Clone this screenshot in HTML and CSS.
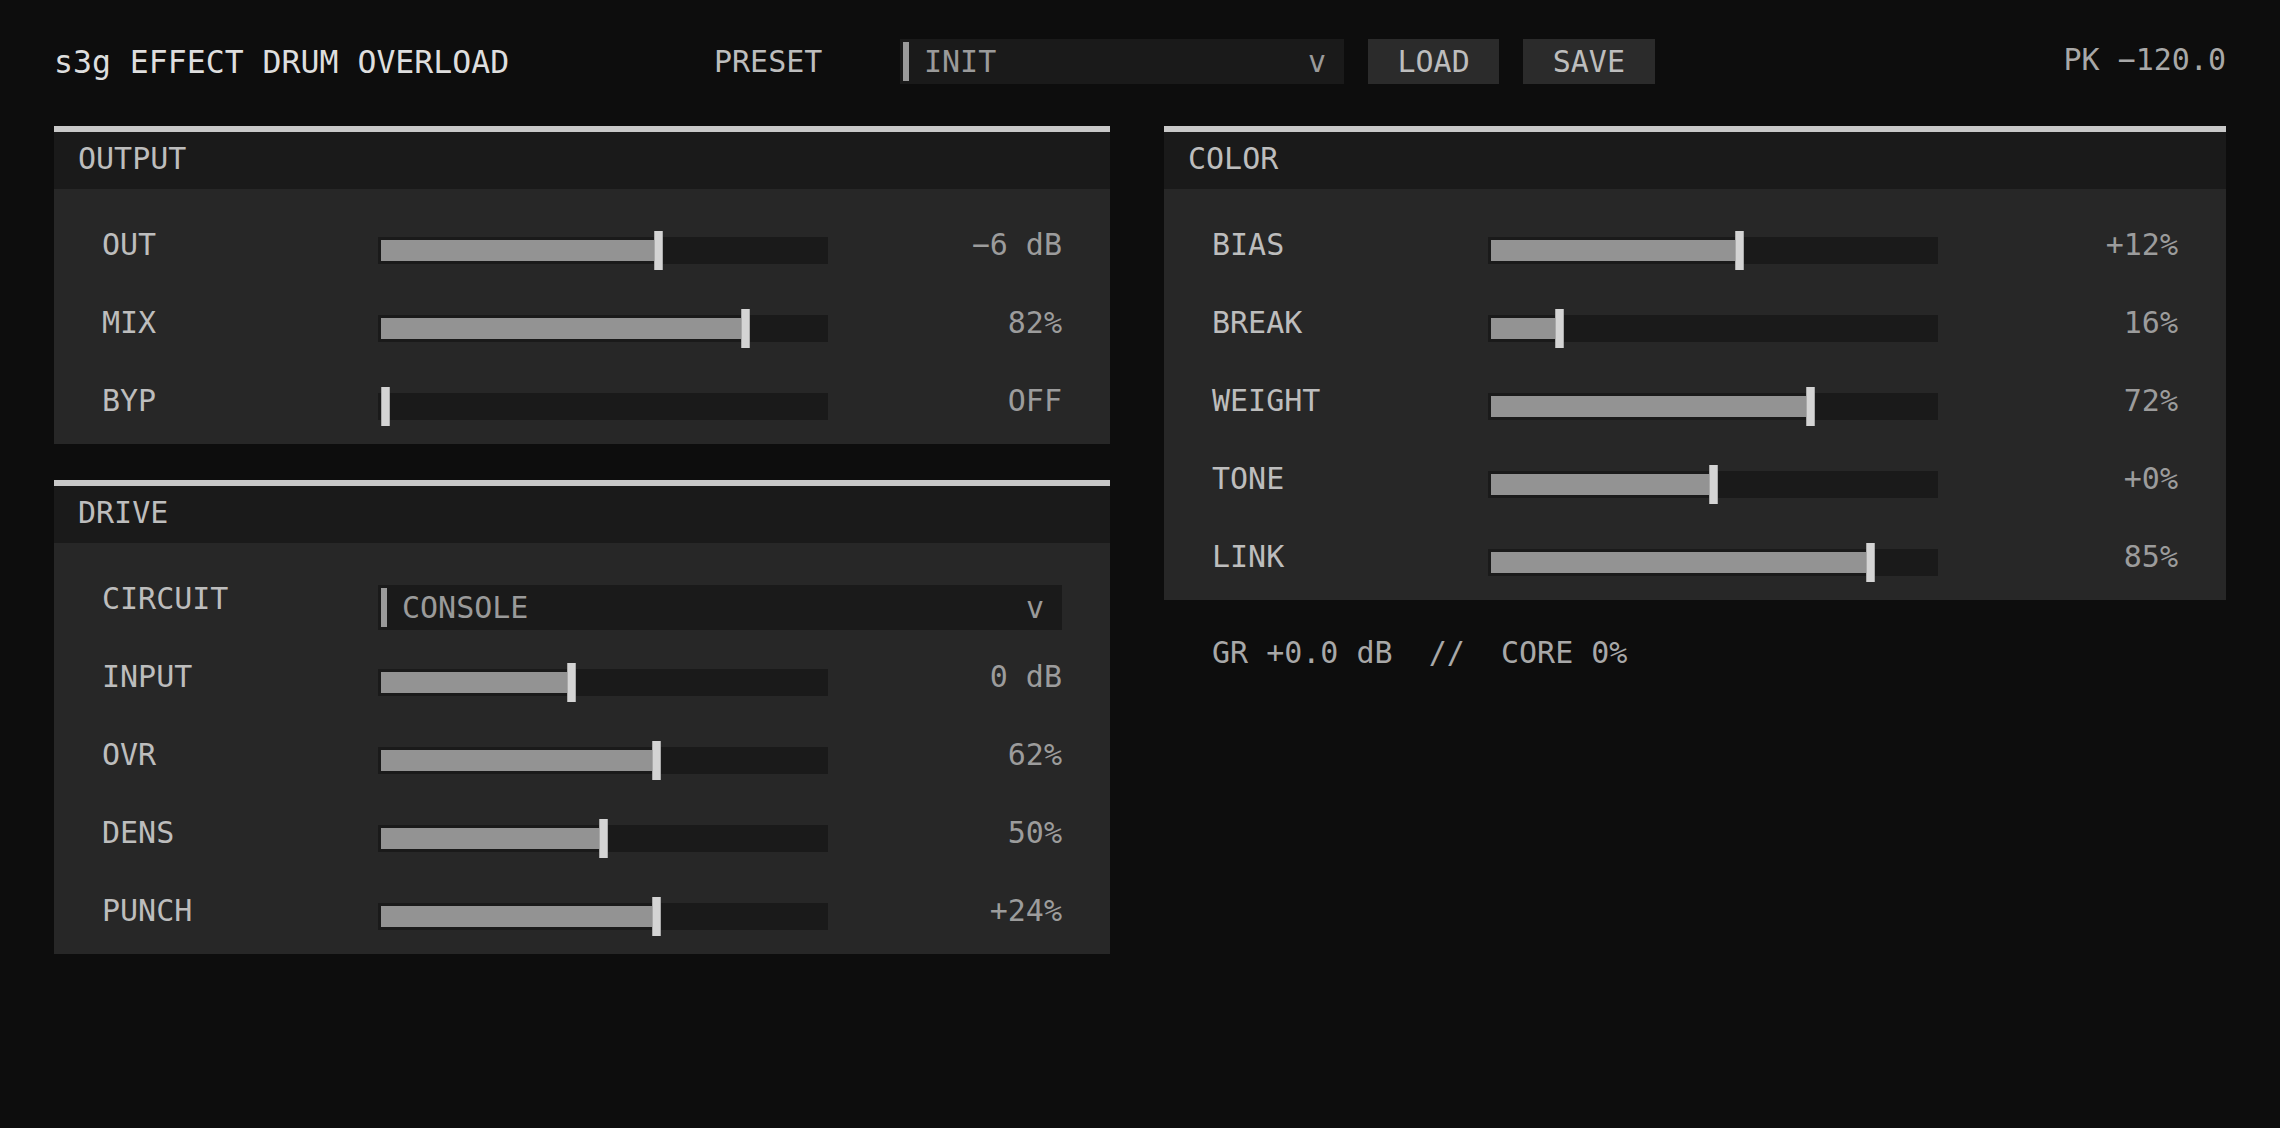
FILE: index.html
```html
<!DOCTYPE html>
<html lang="en">
<head>
<meta charset="utf-8">
<title>s3g EFFECT DRUM OVERLOAD</title>
<link rel="stylesheet" href="styles.css">
</head>
<body>
<div class="app">
  <header class="topbar">
    <div class="title">s3g EFFECT DRUM OVERLOAD</div>
    <div class="preset-label">PRESET</div>
    <div class="select select-top">
      <span class="select-bar"></span>
      <span class="select-text">INIT</span>
      <span class="select-caret">v</span>
    </div>
    <button class="btn">LOAD</button>
    <button class="btn">SAVE</button>
    <div class="peak">PK −120.0</div>
  </header>

  <main class="columns">
    <div class="col">
      <section class="panel">
        <div class="panel-head">OUTPUT</div>
        <div class="panel-body">
          <div class="row">
            <div class="label">OUT</div>
            <div class="slider" style="--p:0.625"><div class="track"><div class="fill"></div></div><div class="handle"></div></div>
            <div class="value">−6 dB</div>
          </div>
          <div class="row">
            <div class="label">MIX</div>
            <div class="slider" style="--p:0.82"><div class="track"><div class="fill"></div></div><div class="handle"></div></div>
            <div class="value">82%</div>
          </div>
          <div class="row">
            <div class="label">BYP</div>
            <div class="slider" style="--p:0"><div class="track"><div class="fill"></div></div><div class="handle"></div></div>
            <div class="value">OFF</div>
          </div>
        </div>
      </section>

      <section class="panel panel-drive">
        <div class="panel-head">DRIVE</div>
        <div class="panel-body">
          <div class="row">
            <div class="label">CIRCUIT</div>
            <div class="select select-row">
              <span class="select-bar"></span>
              <span class="select-text">CONSOLE</span>
              <span class="select-caret">v</span>
            </div>
          </div>
          <div class="row">
            <div class="label">INPUT</div>
            <div class="slider" style="--p:0.4286"><div class="track"><div class="fill"></div></div><div class="handle"></div></div>
            <div class="value">0 dB</div>
          </div>
          <div class="row">
            <div class="label">OVR</div>
            <div class="slider" style="--p:0.62"><div class="track"><div class="fill"></div></div><div class="handle"></div></div>
            <div class="value">62%</div>
          </div>
          <div class="row">
            <div class="label">DENS</div>
            <div class="slider" style="--p:0.5"><div class="track"><div class="fill"></div></div><div class="handle"></div></div>
            <div class="value">50%</div>
          </div>
          <div class="row">
            <div class="label">PUNCH</div>
            <div class="slider" style="--p:0.62"><div class="track"><div class="fill"></div></div><div class="handle"></div></div>
            <div class="value">+24%</div>
          </div>
        </div>
      </section>
    </div>

    <div class="col">
      <section class="panel">
        <div class="panel-head">COLOR</div>
        <div class="panel-body">
          <div class="row">
            <div class="label">BIAS</div>
            <div class="slider" style="--p:0.56"><div class="track"><div class="fill"></div></div><div class="handle"></div></div>
            <div class="value">+12%</div>
          </div>
          <div class="row">
            <div class="label">BREAK</div>
            <div class="slider" style="--p:0.155"><div class="track"><div class="fill"></div></div><div class="handle"></div></div>
            <div class="value">16%</div>
          </div>
          <div class="row">
            <div class="label">WEIGHT</div>
            <div class="slider" style="--p:0.72"><div class="track"><div class="fill"></div></div><div class="handle"></div></div>
            <div class="value">72%</div>
          </div>
          <div class="row">
            <div class="label">TONE</div>
            <div class="slider" style="--p:0.5"><div class="track"><div class="fill"></div></div><div class="handle"></div></div>
            <div class="value">+0%</div>
          </div>
          <div class="row">
            <div class="label">LINK</div>
            <div class="slider" style="--p:0.855"><div class="track"><div class="fill"></div></div><div class="handle"></div></div>
            <div class="value">85%</div>
          </div>
        </div>
      </section>
      <div class="status">GR +0.0 dB  //  CORE 0%</div>
    </div>
  </main>
</div>
</body>
</html>
```

FILE: styles.css
```css
* { box-sizing: border-box; }

html, body {
  margin: 0;
  padding: 0;
  background: #0d0d0d;
}

body {
  font-family: "DejaVu Sans Mono", "Liberation Mono", monospace;
  font-size: 30px;
  color: #bdbdbd;
}

.app {
  padding: 39px 54px 0;
}

/* top bar */
.topbar {
  display: flex;
  align-items: center;
  height: 45px;
}

.title {
  width: 660px;
  font-size: 31.5px;
  color: #dedede;
  white-space: nowrap;
}

.preset-label {
  width: 186px;
  color: #bdbdbd;
}

.select {
  display: flex;
  align-items: center;
  height: 45px;
  padding: 3px;
  background: #1a1a1a;
  color: #9a9a9a;
  line-height: 39px;
}

.select-top { width: 444px; }

.select-bar {
  align-self: stretch;
  width: 6px;
  background: #9a9a9a;
}

.select-text {
  margin-left: 15px;
}

.select-caret {
  margin-left: auto;
  margin-right: 15px;
}

.btn {
  margin-left: 24px;
  height: 45px;
  padding: 0 29.5px;
  border: 0;
  background: #2b2b2b;
  color: #bdbdbd;
  font-family: inherit;
  font-size: 30px;
  line-height: 45px;
}

.peak {
  margin-left: auto;
  margin-bottom: 4px;
  color: #a8a8a8;
}

/* columns */
.columns {
  display: grid;
  grid-template-columns: 1056px 1fr;
  column-gap: 54px;
  margin-top: 42px;
  align-items: start;
}

.panel {
  border-top: 6px solid #c8c8c8;
}

.panel-drive {
  margin-top: 36px;
}

.panel-head {
  height: 57px;
  padding: 9px 24px 0;
  background: #1a1a1a;
  line-height: 35px;
  color: #bdbdbd;
}

.panel-body {
  display: flex;
  flex-direction: column;
  gap: 34px;
  padding: 38px 48px 17px;
  background: #272727;
}

.row {
  display: grid;
  grid-template-columns: 276px 450px 1fr;
  align-items: start;
  height: 44px;
}

.label {
  line-height: 35px;
  color: #bdbdbd;
}

.value {
  line-height: 35px;
  text-align: right;
  color: #9c9c9c;
}

.slider {
  position: relative;
  margin-top: 4px;
  height: 39px;
}

.track {
  margin-top: 6px;
  height: 27px;
  padding: 3px;
  background: #1a1a1a;
}

.fill {
  width: calc(var(--p) * 100%);
  height: 21px;
  background: #939393;
}

.handle {
  position: absolute;
  top: 0;
  left: max(3px, calc(3px + var(--p) * 444px - 4.5px));
  width: 9px;
  height: 39px;
  background: #d4d4d4;
  box-shadow: inset 1px 0 0 #a9a9a9, inset -1px 0 0 #a9a9a9;
}

.select-row {
  grid-column: 2 / 4;
  margin-top: 4px;
}

.status {
  margin-top: 35px;
  padding-left: 48px;
  line-height: 35px;
  white-space: pre;
  color: #a8a8a8;
}
```
